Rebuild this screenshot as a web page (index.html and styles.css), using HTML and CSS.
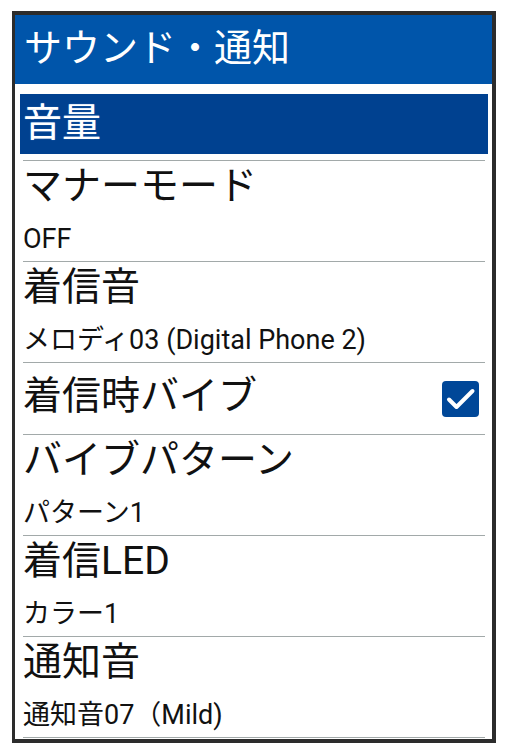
FILE: index.html
```html
<!DOCTYPE html>
<html lang="ja">
<head>
  <meta charset="UTF-8" />
  <meta name="viewport" content="width=device-width, initial-scale=1.0" />
  <title>サウンド・通知</title>
  <link rel="stylesheet" href="styles.css">
</head>
<body>
  <div class="screen">
    <div class="header">サウンド・通知</div>
    <div class="list">
      <div class="item selected">
        <div class="item-body">
          <div class="item-title">音量</div>
        </div>
      </div>
      <div class="item">
        <div class="item-body">
          <div class="item-title">マナーモード</div>
          <div class="item-sub">OFF</div>
        </div>
      </div>
      <div class="item">
        <div class="item-body">
          <div class="item-title">着信音</div>
          <div class="item-sub">メロディ03 (Digital Phone 2)</div>
        </div>
      </div>
      <div class="item single">
        <div class="item-body">
          <div class="item-title">着信時バイブ</div>
          <span class="checkbox">
            <svg viewBox="0 0 37 36" width="37" height="36">
              <path d="M7 18.5l7.5 7.5L30.5 10" fill="none" stroke="#fff" stroke-width="4" stroke-linecap="round" stroke-linejoin="round" />
            </svg>
          </span>
        </div>
      </div>
      <div class="item">
        <div class="item-body">
          <div class="item-title">バイブパターン</div>
          <div class="item-sub">パターン1</div>
        </div>
      </div>
      <div class="item">
        <div class="item-body">
          <div class="item-title">着信LED</div>
          <div class="item-sub">カラー1</div>
        </div>
      </div>
      <div class="item">
        <div class="item-body">
          <div class="item-title">通知音</div>
          <div class="item-sub">通知音07（Mild)</div>
        </div>
      </div>
    </div>
  </div>
</body>
</html>
```

FILE: styles.css
```css
body {
  margin: 11px 0 0 12px;
  background-color: #fff;
  font-family: Roboto, "Noto Sans CJK JP", sans-serif;
  color: #111;
}
.screen {
  width: 477px;
  height: 724px;
  border: 4px solid #2c2c2c;
  border-left-width: 3px;
  background-color: #fff;
  overflow: hidden;
}
.header {
  height: 69px;
  line-height: 66px;
  padding-left: 9px;
  font-size: 38px;
  color: #fff;
  background-color: #0055aa;
}
.list {
  padding: 10px 4px 0 5px;
}
.item {
  margin: 0 3px;
  border-bottom: 1px solid #a2a9a9;
}
.item-title {
  font-size: 39px;
  line-height: 50px;
}
.item-sub {
  font-size: 27px;
  line-height: 44px;
  margin-top: 6px;
}
.selected {
  padding-bottom: 6px;
}
.selected .item-body {
  margin: 0 -3px;
  padding-left: 3px;
  height: 60px;
  background-color: #004190;
  color: #fff;
}
.selected .item-title {
  line-height: 58px;
  text-shadow: 0 0 1px rgba(140, 190, 255, 0.7);
}
.single .item-body {
  height: 71px;
  display: flex;
  align-items: center;
  justify-content: space-between;
}
.single .item-title {
  margin-bottom: 6px;
}
.checkbox {
  width: 37px;
  height: 36px;
  margin-right: 6px;
  border-radius: 4px;
  background-color: #004798;
  display: flex;
}
```
